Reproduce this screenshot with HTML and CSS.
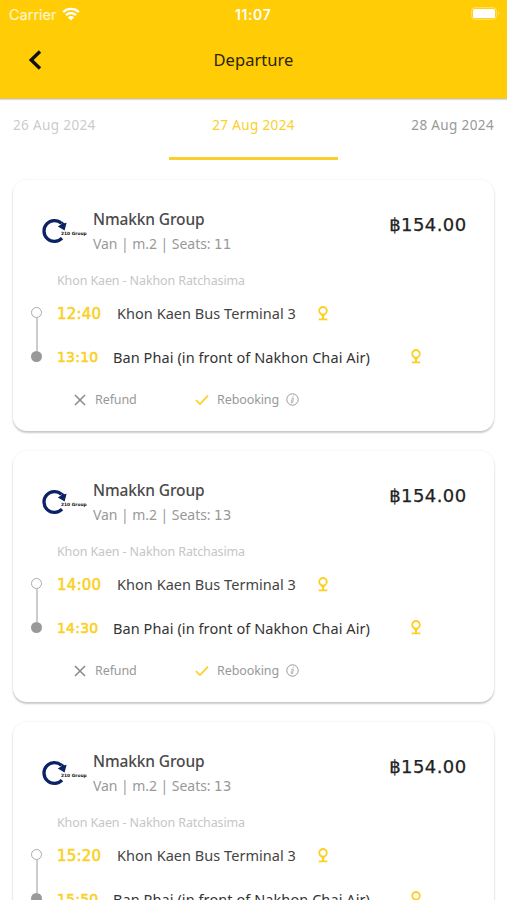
FILE: index.html
```html
<!DOCTYPE html>
<html lang="en">
<head>
<meta charset="utf-8">
<title>Departure</title>
<link rel="stylesheet" href="styles.css">
</head>
<body>
<svg class="defs" width="0" height="0" aria-hidden="true">
  <symbol id="logo" viewBox="0 0 26 26">
    <path d="M19.5 5.4A10.4 10.4 0 1 0 20 20.1" fill="none" stroke="#0b2265" stroke-width="3.3"/>
    <path d="M15.8 8.6L19 6.5L20.6 3.6L22 5.2L24.6 4.8L22.6 12.4Z" fill="#0b2265"/>
  </symbol>
  <symbol id="pin" viewBox="0 0 12 16">
    <circle cx="6" cy="5.8" r="3.8" fill="none" stroke="#fbd022" stroke-width="1.8"/>
    <path d="M6 9.5V14M1.7 14.4H10.3" fill="none" stroke="#fbd022" stroke-width="1.9"/>
    <path d="M2.6 8.2L6 13L9.4 8.2L6 9.6Z" fill="#fbd022"/>
  </symbol>
  <symbol id="cross" viewBox="0 0 12 12"><path d="M1 1L11 11M11 1L1 11" fill="none" stroke="#888" stroke-width="1.5"/></symbol>
  <symbol id="check" viewBox="0 0 14 12"><path d="M1 6.2L5 10L13 1.6" fill="none" stroke="#fbd022" stroke-width="1.7"/></symbol>
  <symbol id="info" viewBox="0 0 13 13">
    <circle cx="6.5" cy="6.5" r="5.7" fill="none" stroke="#999" stroke-width="1"/>
    <path d="M7.6 2.6L6.8 3.9M5.4 5.4L7.3 5L6.7 9.4Q5.4 10.8 5.2 9.2L6 6.4" fill="none" stroke="#aaa" stroke-width=".9"/>
  </symbol>
</svg>
<header class="top">
  <div class="status">
    <span class="carrier">Carrier</span>
    <svg class="wifi" viewBox="0 0 18 14"><path d="M1.2 5.1C5.5 .9 12.5 .9 16.8 5.1M4 8.1C6.8 5.4 11.2 5.4 14 8.1" fill="none" stroke="#fff" stroke-width="2.3"/><path d="M5.9 10.3Q9 7.8 12.1 10.3L9 13.5Z" fill="#fff"/></svg>
    <span class="clock">11:07</span>
    <svg class="battery" viewBox="0 0 30 13"><rect x=".7" y=".7" width="24.6" height="11.6" rx="3" fill="none" stroke="#ffe275"/><rect x="2" y="2" width="22" height="9" rx="1.5" fill="#fff"/><path d="M27 4.5Q29 6.5 27 8.5Z" fill="#ffe275"/></svg>
  </div>
  <div class="nav">
    <svg class="back" viewBox="0 0 14 20"><path d="M12 1.5L3.2 10L12 18.5" fill="none" stroke="#111" stroke-width="3.4"/></svg>
    <h1>Departure</h1>
  </div>
</header>
<nav class="dates">
  <a class="past">26 Aug 2024</a><a class="current">27 Aug 2024</a><a class="next">28 Aug 2024</a>
</nav>
<main>
  <article class="card">
    <div class="head">
      <div class="logo"><svg><use href="#logo"/></svg><span>210 Group</span></div>
      <div class="who"><h2>Nmakkn Group</h2><p>Van | m.2 | Seats: <span class="num">11</span></p></div>
      <div class="price">฿154.00</div>
    </div>
    <p class="route">Khon Kaen - Nakhon Ratchasima</p>
    <div class="trip">
      <div class="rail"><i class="open"></i><i class="line"></i><i class="full"></i></div>
      <div class="stops">
        <div class="stop from"><time>12:40</time><span>Khon Kaen Bus Terminal 3</span><svg><use href="#pin"/></svg></div>
        <div class="stop to"><time>13:10</time><span>Ban Phai (in front of Nakhon Chai Air)</span><svg><use href="#pin"/></svg></div>
      </div>
    </div>
    <div class="terms"><svg class="cross"><use href="#cross"/></svg><span class="refund">Refund</span><svg class="check"><use href="#check"/></svg><span class="rebook">Rebooking</span><svg class="info"><use href="#info"/></svg></div>
  </article>
  <article class="card">
    <div class="head">
      <div class="logo"><svg><use href="#logo"/></svg><span>210 Group</span></div>
      <div class="who"><h2>Nmakkn Group</h2><p>Van | m.2 | Seats: <span class="num">13</span></p></div>
      <div class="price">฿154.00</div>
    </div>
    <p class="route">Khon Kaen - Nakhon Ratchasima</p>
    <div class="trip">
      <div class="rail"><i class="open"></i><i class="line"></i><i class="full"></i></div>
      <div class="stops">
        <div class="stop from"><time>14:00</time><span>Khon Kaen Bus Terminal 3</span><svg><use href="#pin"/></svg></div>
        <div class="stop to"><time>14:30</time><span>Ban Phai (in front of Nakhon Chai Air)</span><svg><use href="#pin"/></svg></div>
      </div>
    </div>
    <div class="terms"><svg class="cross"><use href="#cross"/></svg><span class="refund">Refund</span><svg class="check"><use href="#check"/></svg><span class="rebook">Rebooking</span><svg class="info"><use href="#info"/></svg></div>
  </article>
  <article class="card">
    <div class="head">
      <div class="logo"><svg><use href="#logo"/></svg><span>210 Group</span></div>
      <div class="who"><h2>Nmakkn Group</h2><p>Van | m.2 | Seats: <span class="num">13</span></p></div>
      <div class="price">฿154.00</div>
    </div>
    <p class="route">Khon Kaen - Nakhon Ratchasima</p>
    <div class="trip">
      <div class="rail"><i class="open"></i><i class="line"></i><i class="full"></i></div>
      <div class="stops">
        <div class="stop from"><time>15:20</time><span>Khon Kaen Bus Terminal 3</span><svg><use href="#pin"/></svg></div>
        <div class="stop to"><time>15:50</time><span>Ban Phai (in front of Nakhon Chai Air)</span><svg><use href="#pin"/></svg></div>
      </div>
    </div>
  </article>
</main>
</body>
</html>
```
FILE: styles.css
```css
* { box-sizing: border-box; margin: 0; padding: 0; }
html, body { height: 900px; overflow: hidden; }
body { background: #fff; font-family: "Noto Sans", sans-serif; color: #444; white-space: nowrap; }
svg { display: block; flex: none; }
.defs { position: absolute; }
.top { height: 99px; background: #ffcc05; border-bottom: 1px solid #e2c76a; box-shadow: 0 1px 1px #ddd; }
.status { height: 28px; padding: 0 5px 0 9px; display: grid; grid-template-columns: 47px 18px 1fr 30px; column-gap: 6px; align-items: center; font-family: Inter, sans-serif; font-size: 14.5px; color: #fff; }
.carrier { color: #fff6c9; -webkit-text-stroke: .2px #fff6c9; }
.wifi { width: 18px; height: 14px; margin-top: -1px; }
.clock { font-weight: 600; font-size: 14px; letter-spacing: .6px; margin-left: 149px; }
.battery { width: 30px; height: 13px; margin: -1px 0 0 -1px; }
.nav { height: 64px; display: grid; grid-template-columns: 42px 1fr 42px; align-items: center; }
.back { width: 14px; height: 20px; margin-left: 28px; }
h1 { margin-top: -2px; font-size: 16.5px; font-weight: 400; text-align: center; color: #2b2508; letter-spacing: .05px; }
.dates { height: 61px; display: grid; grid-template-columns: repeat(3, 1fr); font-size: 13.5px; line-height: 52px; letter-spacing: .37px; }
.past { padding-left: 13px; color: #ccc; }
.current { color: #fbcf2c; text-align: center; border-bottom: 3px solid #fbd02c; }
.next { color: #999; text-align: right; padding-right: 13px; }
main { padding: 20px 13px 0; display: flex; flex-direction: column; gap: 20.2px; }
.card { height: 251px; flex: none; border-radius: 14px; background: #fff; box-shadow: 0 2px 2px rgba(0,0,0,.2), 0 0 3px rgba(0,0,0,.07); }
.head { height: 86px; padding: 26px 28px 0 30px; display: flex; }
.logo { width: 50px; height: 50px; display: flex; align-items: center; }
.logo svg { width: 26px; height: 26px; margin-left: -1px; }
.logo span { margin: 5px 0 0 -7px; font: 700 4.4px/6px "DejaVu Sans", sans-serif; color: #111; }
.who { flex: 1; }
h2 { font-size: 15.5px; line-height: 26px; font-weight: 500; letter-spacing: -.12px; color: #4a4a4a; }
.who p { font-size: 14px; line-height: 24px; letter-spacing: -.05px; color: #999; }
.num { font-family: "DejaVu Sans", sans-serif; font-size: 13.5px; }
.price { font: 18px/37px "DejaVu Sans", sans-serif; letter-spacing: .4px; margin-right: -.5px; color: #222; -webkit-text-stroke: .25px #222; }
.route { padding-left: 44px; font-size: 12.5px; line-height: 29px; height: 28px; letter-spacing: -.12px; color: #c6c6c6; }
.trip { height: 87px; display: flex; padding-left: 18px; }
.rail { width: 26px; padding-top: 13px; display: flex; flex-direction: column; }
.rail i { display: block; width: 11px; }
.open { height: 11px; border: 1.5px solid #aaa; border-radius: 50%; }
.rail .line { width: 2px; height: 33px; margin-left: 4.5px; background: #ccc; }
.full { height: 11px; border-radius: 50%; background: #999; }
.stops { margin-top: -3px; }
.stop { height: 44px; display: flex; align-items: center; font-size: 14.5px; letter-spacing: .04px; }
.stop.from { padding-top: -2px; }
.stop.to { color: #333; letter-spacing: .08px; }
time { width: 60px; color: #fbd022; font: 15px "DejaVu Sans", sans-serif; letter-spacing: .2px; padding-top: 2px; -webkit-text-stroke: .55px #fbd022; }
.to time { width: 56px; font-size: 14px; padding-top: 0; }
.stop span { width: 200px; }
.to span { width: 297px; }
.stop svg { width: 12px; height: 16px; margin-top: -1px; }
.to svg { margin-top: -2px; }
.terms { height: 36px; padding: 1px 0 0 61px; display: flex; align-items: center; font-size: 12.5px; letter-spacing: -.1px; color: #999; }
.cross { width: 12px; height: 12px; margin-right: 9px; }
.refund { width: 100px; }
.check { width: 14px; height: 12px; margin-right: 8px; }
.rebook { width: 69px; }
.info { width: 13px; height: 13px; }
```
